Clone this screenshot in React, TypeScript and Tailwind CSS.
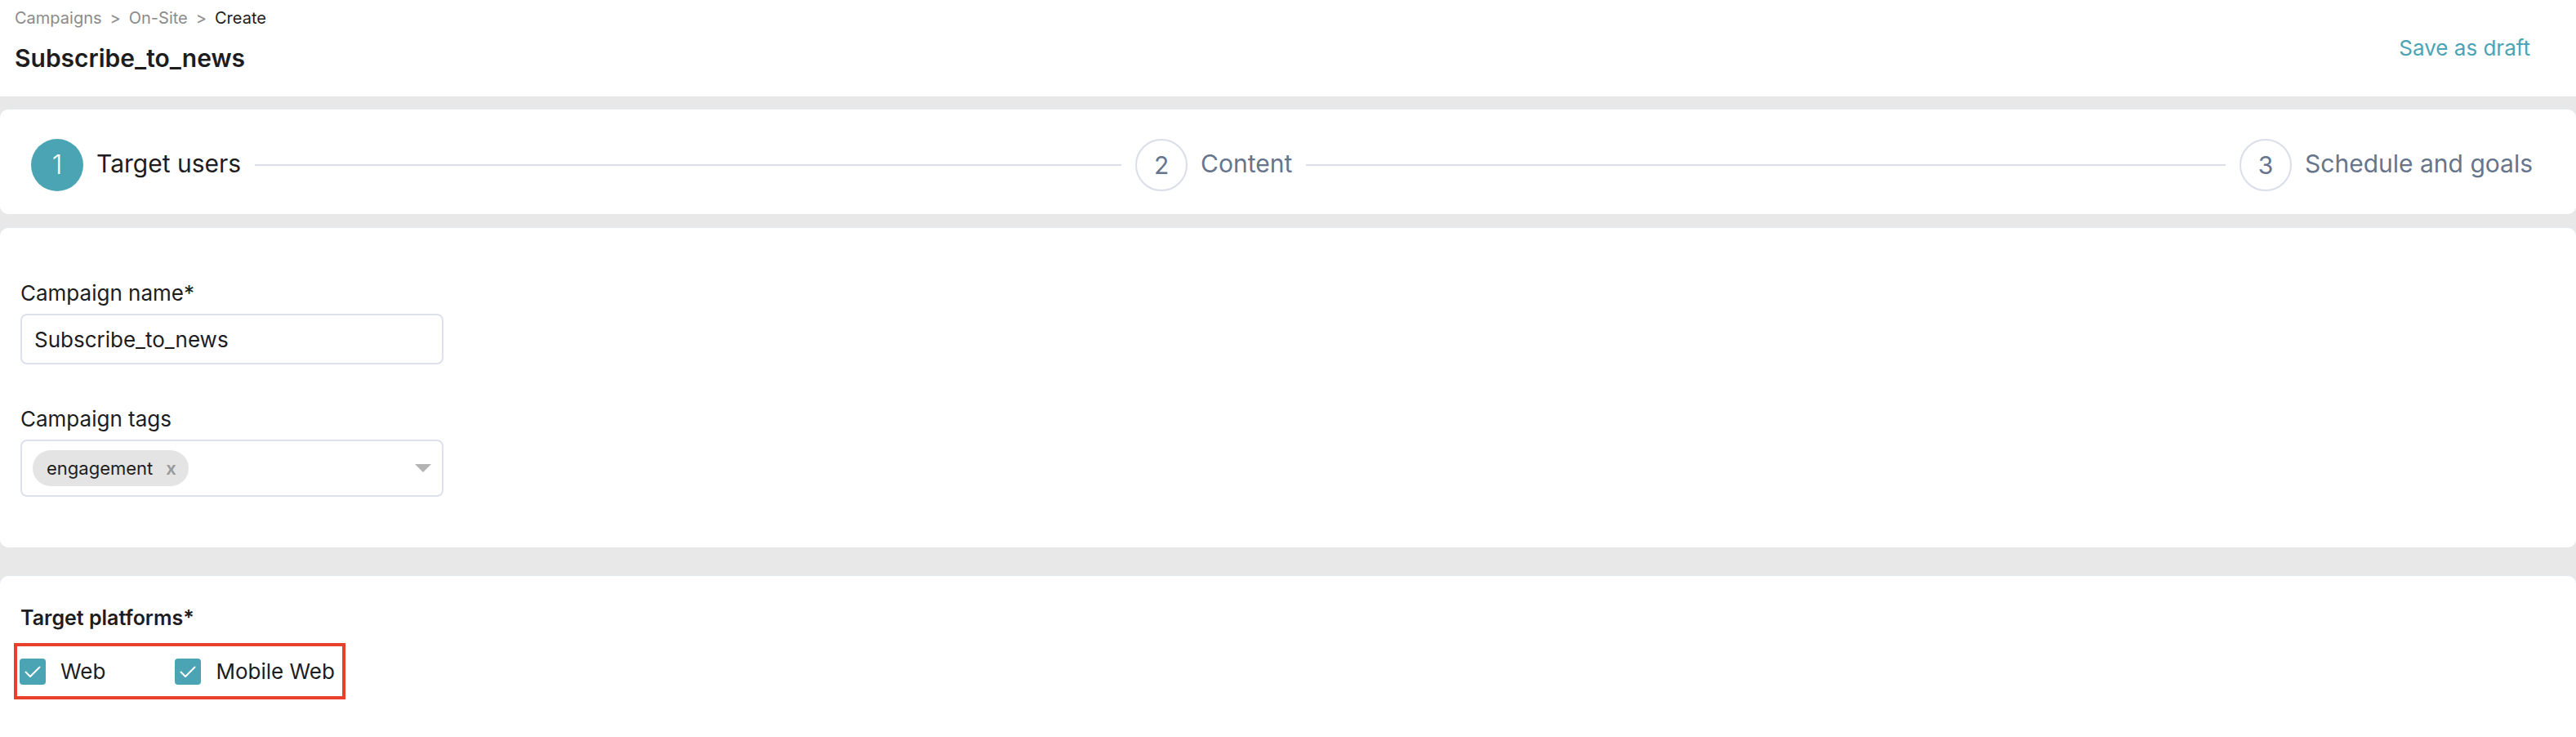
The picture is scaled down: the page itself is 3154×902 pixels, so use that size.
import { useState } from "react";

const steps = [
  { n: 1, label: "Target users" },
  { n: 2, label: "Content" },
  { n: 3, label: "Schedule and goals" },
];

function Check() {
  return (
    <svg viewBox="0 0 32 32" className="w-[32px] h-[32px]">
      <rect width="32" height="32" rx="4" fill="#4ba4b4" />
      <path d="M7.5 16.5l5.5 5.5L24.5 10.5" fill="none" stroke="#fff" strokeWidth="2" strokeLinecap="round" strokeLinejoin="round" />
    </svg>
  );
}

export default function App() {
  const [platforms, setPlatforms] = useState({ web: true, mobile: true });

  return (
    <div className="h-screen overflow-hidden flex flex-col bg-[#e8e8e8] text-[#1d1d1f] font-['Inter','Noto_Sans',sans-serif]">
      {/* Page header */}
      <header className="h-[118px] shrink-0 bg-white flex justify-between pl-[18px] pr-[56px]">
        <div>
          <div className="pt-2 text-[20px] leading-[28px] text-[#8b8b8b]">
            Campaigns<span className="mx-[10px]">&gt;</span>On-Site<span className="mx-[10px]">&gt;</span>
            <span className="text-[#1d1d1f]">Create</span>
          </div>
          <h1 className="mt-[17px] text-[30px] leading-[36px] font-semibold">Subscribe_to_news</h1>
        </div>
        <button className="self-center text-[26px] leading-[36px] text-[#4ba4b4]">Save as draft</button>
      </header>

      {/* Stepper */}
      <div className="mt-4 h-[128px] shrink-0 bg-white rounded-[10px] shadow-[0_-1px_0_#e4eaf2] flex items-center pl-[38px] pr-[53px] pt-[8px]">
        {steps.map((s, i) => (
          <div key={s.n} className={`flex items-center ${i < steps.length - 1 ? "flex-1" : ""}`}>
            <div
              className={
                s.n === 1
                  ? "w-[64px] h-[64px] shrink-0 rounded-full bg-[#4ba4b4] text-white flex items-center justify-center text-[32px] font-light"
                  : "w-[64px] h-[64px] shrink-0 rounded-full border-2 border-[#d9dee9] text-[#66758c] flex items-center justify-center text-[30px]"
              }
            >
              {s.n}
            </div>
            <span className={`ml-4 -mt-[5px] text-[30px] leading-[36px] whitespace-nowrap ${s.n === 1 ? "text-[#1d1d1f]" : "text-[#66758c]"}`}>
              {s.label}
            </span>
            {i < steps.length - 1 && <div className="flex-1 h-[2px] bg-[#d9dee9] mx-[17px]" />}
          </div>
        ))}
      </div>

      {/* Campaign details */}
      <section className="mt-[17px] h-[391px] shrink-0 bg-white rounded-[10px] shadow-[0_-1px_0_#e4eaf2] pl-[25px] pt-[64px]">
        <label className="block text-[26px] leading-[32px]">Campaign name*</label>
        <div className="mt-[9px] w-[518px] h-[62px] border-2 border-[#dde1eb] rounded-[8px] flex items-center pl-[15px] text-[26px]">
          Subscribe_to_news
        </div>

        <label className="block mt-[51px] text-[26px] leading-[32px]">Campaign tags</label>
        <div className="mt-[9px] w-[518px] h-[70px] border-2 border-[#dde1eb] rounded-[8px] flex items-center pl-[13px] pr-[13px]">
          <span className="h-[44px] rounded-full bg-[#e4e4e4] flex items-center pl-[17px] pr-[15px] text-[22px]">
            engagement
            <span className="ml-[16px] text-[#999] text-[22px] font-semibold">x</span>
          </span>
          <span className="ml-auto w-0 h-0 border-l-[10px] border-r-[10px] border-t-[10px] border-l-transparent border-r-transparent border-t-[#b3b3b3]" />
        </div>
      </section>

      {/* Platforms */}
      <section className="mt-[35px] flex-1 bg-white rounded-t-[10px] shadow-[0_-1px_0_#e4eaf2] pl-[25px] pt-[35px]">
        <h2 className="text-[25px] leading-[32px] font-semibold">Target platforms*</h2>
        <div className="mt-[15px] -ml-2 inline-flex items-center h-[69px] border-4 border-[#e8402b] pl-[3px] pr-[9px] text-[26px]">
          <label className="flex items-center cursor-pointer" onClick={() => setPlatforms({ ...platforms, web: !platforms.web })}>
            {platforms.web ? <Check /> : <span className="w-[32px] h-[32px] rounded border-2 border-[#ccc]" />}
            <span className="ml-[18px]">Web</span>
          </label>
          <label className="ml-[85px] flex items-center cursor-pointer" onClick={() => setPlatforms({ ...platforms, mobile: !platforms.mobile })}>
            {platforms.mobile ? <Check /> : <span className="w-[32px] h-[32px] rounded border-2 border-[#ccc]" />}
            <span className="ml-[18px]">Mobile Web</span>
          </label>
        </div>
      </section>
    </div>
  );
}
